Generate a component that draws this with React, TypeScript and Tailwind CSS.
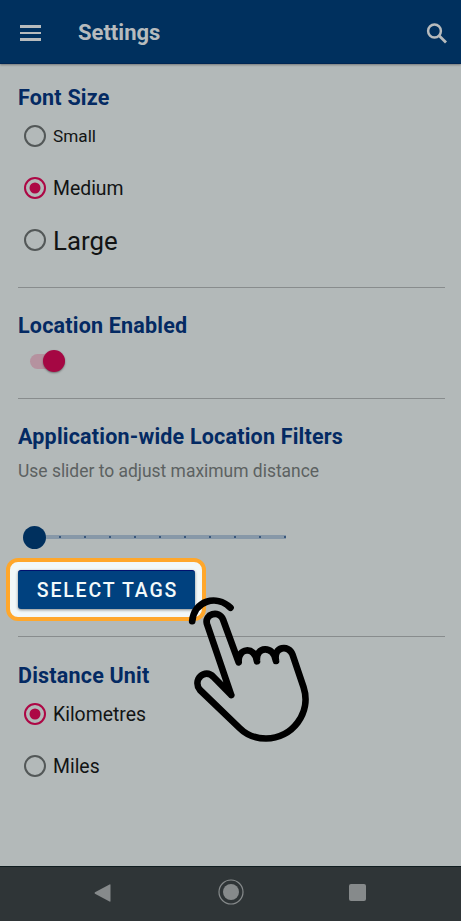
import type { ReactNode } from 'react';

function Radio({ label, checked = false, size }: { label: string; checked?: boolean; size: string }) {
  return (
    <label className="flex h-[52px] items-center pl-[6px]">
      <svg width="22" height="22" viewBox="0 0 22 22" fill="none">
        <circle cx="11" cy="11" r="10" stroke={checked ? '#ad0745' : '#535858'} strokeWidth="2" />
        {checked && <circle cx="11" cy="11" r="5.5" fill="#ad0745" />}
      </svg>
      <span className={`mt-[2px] ml-[7px] whitespace-nowrap text-[#121414] ${size}`}>{label}</span>
    </label>
  );
}

function Title({ children, className = '' }: { children: ReactNode; className?: string }) {
  return (
    <h2 className={`flex h-[26px] items-center whitespace-nowrap pt-[2px] text-[21.5px] font-bold tracking-[0.2px] text-[#042a63] ${className}`}>
      {children}
    </h2>
  );
}

function Divider({ className }: { className: string }) {
  return <div className={`h-px bg-[#888c8d] ${className}`} />;
}

function TapHand() {
  return (
    <svg
      className="absolute top-[10px] left-[162px] z-10"
      width="150"
      height="170"
      viewBox="180 580 150 170"
      fill="none"
      stroke="#000"
      strokeWidth="6.7"
      strokeLinecap="round"
      strokeLinejoin="round"
    >
      <path d="M192.2 621.2C194 601 216 594 230.5 607.7" />
      <path d="M231.2 695L207 624C204 614 219 609.5 223 619.5L238.7 662.3C237 648 255 645.5 257 661.3C255 646 274 645 276 661C273 646 289 644.5 292.5 654.5L303.5 687C312 713 292 738.5 266 738.5C255 738.5 246 734.5 239.5 728L200 690C192 680 205 667.5 213.5 677L231.2 695" />
    </svg>
  );
}

export default function App() {
  return (
    <div className="flex h-[921px] w-[461px] flex-col overflow-hidden bg-[#b3b9b9] font-['Roboto',sans-serif]">
      <header className="flex h-16 shrink-0 items-center border-b border-[#002653] bg-[#00305e] pr-[14px] pl-5 text-[#b7bbbd] shadow-[0_1px_2px_rgba(0,0,0,0.35)]">
        <button className="mt-[3px] flex w-[21px] flex-col gap-[4px]" aria-label="Menu">
          <span className="h-[2.5px] bg-current" />
          <span className="h-[2.5px] bg-current" />
          <span className="h-[2.5px] bg-current" />
        </button>
        <h1 className="mt-[2px] ml-[37px] flex-1 text-[22px] font-bold">Settings</h1>
        <svg className="mt-[3px]" width="21" height="21" viewBox="0 0 21 21" fill="none" stroke="currentColor" strokeWidth="2.5">
          <circle cx="8.5" cy="8" r="6.4" />
          <path d="M13.2 12.7L20 19.5" strokeWidth="2.8" />
        </svg>
      </header>

      <main className="flex flex-1 flex-col pt-5 pr-4 pl-[18px]">
        <Title>Font Size</Title>
        <Radio label="Small" size="text-[17.2px]" />
        <Radio label="Medium" checked size="text-[19.4px]" />
        <Radio label="Large" size="text-[25.8px]" />
        <Divider className="mt-[21px]" />

        <Title className="mt-6">Location Enabled</Title>
        <div className="flex h-[46px] items-center pl-3">
          <div className="flex h-[15px] w-[35px] items-center justify-end rounded-full bg-[#b5929f]">
            <span className="h-[22px] w-[22px] shrink-0 rounded-full bg-[#a50743] shadow-[0_1px_2px_rgba(0,0,0,0.4)]" />
          </div>
        </div>
        <Divider className="mt-[14px]" />

        <Title className="mt-6">Application-wide Location Filters</Title>
        <p className="mt-[10px] flex h-[22px] items-center whitespace-nowrap pt-[2px] text-[17.45px] text-[#5c6161]">
          Use slider to adjust maximum distance
        </p>
        <div className="mt-[44px] flex h-6 items-center pl-[5px]">
          <span className="h-[23px] w-[23px] rounded-full bg-[#00305e]" />
          <div className="flex h-1 w-[240px] items-center justify-between bg-[#8798a8] pl-[13px]">
            {Array.from({ length: 10 }, (_, i) => (
              <span key={i} className="h-[2px] w-[2px] rounded-full bg-[#1f426d]" />
            ))}
          </div>
        </div>

        <div className="relative mt-[21px] h-[38px]">
          <div className="absolute -top-3 -left-3 h-[63px] w-[200px] rounded-[12px] border-4 border-[#ffa72b] bg-[#f2f8f8]" />
          <button className="relative flex h-[39px] w-[177px] items-center justify-center rounded-[3px] border-t border-[#00116f] bg-[#00417f] pt-px pl-[2px] text-[19.5px] font-medium tracking-[1.8px] whitespace-nowrap text-[#f4fafa] shadow-[0_1px_3px_rgba(0,0,0,0.45)]">
            SELECT TAGS
          </button>
          <TapHand />
        </div>
        <Divider className="mt-7" />

        <Title className="mt-[25px]">Distance Unit</Title>
        <Radio label="Kilometres" checked size="text-[19.4px]" />
        <Radio label="Miles" size="text-[19.4px]" />
      </main>

      <nav className="flex h-[55px] shrink-0 items-center border-t border-[#101d20] bg-[#2f3537] pl-[94px] text-[#868a8b]">
        <svg className="mt-[-3px]" width="17" height="18" viewBox="0 0 17 18" fill="currentColor">
          <path d="M15.5 .5Q16.5 0 16.5 1V17Q16.5 18 15.5 17.5L1 9.7Q0 9 1 8.3Z" />
        </svg>
        <svg className="mt-[-4px] ml-[107px]" width="26" height="26" viewBox="0 0 26 26">
          <circle cx="13" cy="13" r="12" fill="none" stroke="currentColor" strokeWidth="1.2" />
          <circle cx="13" cy="13" r="8" fill="currentColor" />
        </svg>
        <span className="mt-[-3px] ml-[105px] h-[17px] w-[17px] rounded-[2px] bg-current" />
      </nav>
    </div>
  );
}
